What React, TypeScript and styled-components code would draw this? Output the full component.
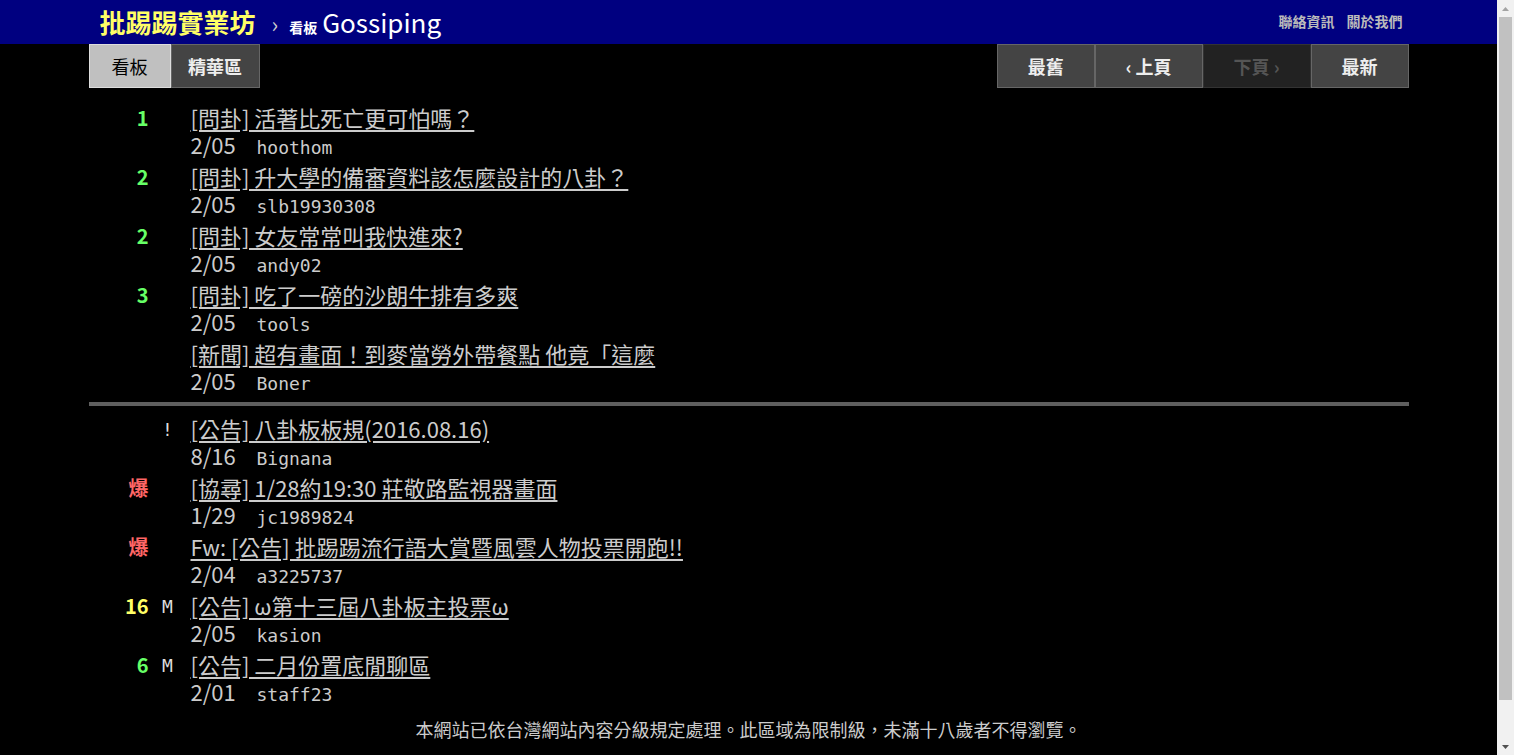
import React from "react";
import styled, { createGlobalStyle, css } from "styled-components";

const Global = createGlobalStyle`
  html, body { margin: 0; padding: 0; background: #000; overflow: hidden; }
  body {
    font-family: "Noto Sans CJK TC", "Noto Sans", sans-serif;
    color: #ccc;
  }
  * { box-sizing: border-box; }
`;

const Shell = styled.div`
  display: flex;
  height: 100vh;
`;

const Page = styled.div`
  flex: 1;
  min-width: 0;
  height: 100vh;
  overflow: hidden;
  background: #000;
`;

const ScrollBar = styled.div`
  width: 17px;
  height: 100vh;
  background: #f1f1f1;
  display: flex;
  flex-direction: column;
  align-items: center;
`;

const ScrollArrow = styled.div<{ $dark?: boolean }>`
  height: 17px;
  width: 17px;
  display: flex;
  align-items: center;
  justify-content: center;
  svg { display: block; }
  color: ${(p) => (p.$dark ? "#505050" : "#a3a3a3")};
`;

const ScrollTrack = styled.div`
  flex: 1;
  width: 100%;
  padding: 0 2px;
  display: flex;
  flex-direction: column;
`;

const ScrollThumb = styled.div`
  height: 683px;
  background: #c1c1c1;
`;

const TopBar = styled.header`
  background: #000080;
  height: 44px;
`;

const TopInner = styled.div`
  width: 1320px;
  height: 100%;
  margin: 0 auto;
  padding: 0 6px 0 11px;
  display: flex;
  align-items: center;
  justify-content: space-between;
`;

const Brand = styled.div`
  display: flex;
  align-items: baseline;
`;

const Logo = styled.a`
  font-size: 26px;
  font-weight: bold;
  color: #ffff66;
  text-decoration: none;
  line-height: 44px;
`;

const Crumb = styled.span`
  color: #ccc;
  font-size: 22px;
  margin: 0 11px 0 16px;
`;

const BoardLabel = styled.span`
  color: #fff;
  font-size: 14px;
  font-weight: bold;
  margin-right: 5px;
`;

const BoardName = styled.a`
  color: #fff;
  font-size: 26px;
  text-decoration: none;
`;

const Links = styled.nav`
  display: flex;
  gap: 12px;
  margin-top: -3px;
`;

const TopLink = styled.a`
  color: #bbb;
  font-size: 14px;
  font-weight: bold;
  text-decoration: none;
`;

const Main = styled.main`
  width: 1320px;
  margin: 0 auto;
`;

const ActionBar = styled.div`
  display: flex;
  justify-content: space-between;
  height: 44px;
`;

const BtnGroup = styled.div`
  display: flex;
`;

type Variant = "normal" | "selected" | "disabled";

const Btn = styled.a<{ $variant?: Variant; $w?: number }>`
  height: 44px;
  display: flex;
  align-items: center;
  justify-content: center;
  padding: 0 30px;
  border: 1px solid #666;
  background: #444;
  color: #eee;
  font-size: 18px;
  font-weight: bold;
  text-decoration: none;
  white-space: nowrap;
  ${(p) => (p.$w ? css`width: ${p.$w}px; padding: 0;` : "")}
  ${(p) =>
    p.$variant === "selected" &&
    css`
      background: #c0c0c0;
      color: #000;
      border-color: #ddd;
      font-weight: normal;
    `}
  ${(p) =>
    p.$variant === "disabled" &&
    css`
      background: #222;
      color: #555;
      border-color: #333;
    `}
`;

const List = styled.div`
  margin-top: 11px;
`;

const Entry = styled.div`
  display: flex;
  height: 59px;
  padding: 4px 0 3px 20px;
`;

const Nrec = styled.div<{ $color?: string }>`
  width: 40px;
  text-align: right;
  font-size: 20px;
  font-weight: bold;
  line-height: 30px;
  color: ${(p) => p.$color || "#ccc"};
`;

const Mark = styled.div`
  width: 32px;
  margin: 0 7px 0 3px;
  text-align: center;
  font-family: "DejaVu Sans Mono", monospace;
  font-size: 18px;
  line-height: 32px;
  color: #ddd;
`;

const EntryBody = styled.div`
  display: flex;
  flex-direction: column;
`;

const Title = styled.a`
  height: 28px;
  font-size: 22px;
  line-height: 28px;
  color: #ccc;
  text-decoration: underline;
  text-underline-offset: 3px;
  white-space: nowrap;
`;

const Meta = styled.div`
  display: flex;
  align-items: baseline;
  height: 24px;
  padding-top: 2px;
`;

const DateText = styled.span`
  width: 66px;
  font-size: 22px;
  line-height: 22px;
`;

const Author = styled.span`
  font-family: "DejaVu Sans Mono", monospace;
  font-size: 18px;
  line-height: 22px;
`;

const Separator = styled.div`
  height: 4px;
  background: #5f5f5f;
  margin: 8px 0 4px;
`;

const Footer = styled.footer`
  text-align: center;
  font-size: 18px;
  line-height: 24px;
  margin-top: 12px;
  padding-bottom: 60px;
`;

type Item = { n?: string; c?: string; mark?: string; title: string; date: string; author: string };

const GREEN = "#66ff66";
const YELLOW = "#ffff66";
const RED = "#ff6666";

const posts: Item[] = [
  { n: "1", c: GREEN, title: "[問卦] 活著比死亡更可怕嗎？", date: "2/05", author: "hoothom" },
  { n: "2", c: GREEN, title: "[問卦] 升大學的備審資料該怎麼設計的八卦？", date: "2/05", author: "slb19930308" },
  { n: "2", c: GREEN, title: "[問卦] 女友常常叫我快進來?", date: "2/05", author: "andy02" },
  { n: "3", c: GREEN, title: "[問卦] 吃了一磅的沙朗牛排有多爽", date: "2/05", author: "tools" },
  { title: "[新聞] 超有畫面！到麥當勞外帶餐點 他竟「這麼", date: "2/05", author: "Boner" },
];

const pinned: Item[] = [
  { mark: "!", title: "[公告] 八卦板板規(2016.08.16)", date: "8/16", author: "Bignana" },
  { n: "爆", c: RED, title: "[協尋] 1/28約19:30 莊敬路監視器畫面", date: "1/29", author: "jc1989824" },
  { n: "爆", c: RED, title: "Fw: [公告] 批踢踢流行語大賞暨風雲人物投票開跑!!", date: "2/04", author: "a3225737" },
  { n: "16", c: YELLOW, mark: "M", title: "[公告] ω第十三屆八卦板主投票ω", date: "2/05", author: "kasion" },
  { n: "6", c: GREEN, mark: "M", title: "[公告] 二月份置底閒聊區", date: "2/01", author: "staff23" },
];

const Row = ({ item }: { item: Item }) => (
  <Entry>
    <Nrec $color={item.c}>{item.n || ""}</Nrec>
    <Mark>{item.mark || ""}</Mark>
    <EntryBody>
      <Title href="#">{item.title}</Title>
      <Meta>
        <DateText>{item.date}</DateText>
        <Author>{item.author}</Author>
      </Meta>
    </EntryBody>
  </Entry>
);

const Tri = ({ up }: { up?: boolean }) => (
  <svg width="7" height="4" viewBox="0 0 7 4">
    <path d={up ? "M0 4 L3.5 0 L7 4 Z" : "M0 0 L3.5 4 L7 0 Z"} fill="currentColor" />
  </svg>
);

export default function App() {
  return (
    <>
      <Global />
      <Shell>
        <Page>
          <TopBar>
            <TopInner>
              <Brand>
                <Logo href="#">批踢踢實業坊</Logo>
                <Crumb>›</Crumb>
                <BoardLabel>看板</BoardLabel>
                <BoardName href="#">Gossiping</BoardName>
              </Brand>
              <Links>
                <TopLink href="#">聯絡資訊</TopLink>
                <TopLink href="#">關於我們</TopLink>
              </Links>
            </TopInner>
          </TopBar>
          <Main>
            <ActionBar>
              <BtnGroup>
                <Btn href="#" $variant="selected" $w={82}>看板</Btn>
                <Btn href="#" $w={89}>精華區</Btn>
              </BtnGroup>
              <BtnGroup>
                <Btn href="#">最舊</Btn>
                <Btn href="#">‹ 上頁</Btn>
                <Btn $variant="disabled">下頁 ›</Btn>
                <Btn href="#">最新</Btn>
              </BtnGroup>
            </ActionBar>
            <List>
              {posts.map((p, i) => (
                <Row key={"p" + i} item={p} />
              ))}
              <Separator />
              {pinned.map((p, i) => (
                <Row key={"s" + i} item={p} />
              ))}
            </List>
            <Footer>本網站已依台灣網站內容分級規定處理。此區域為限制級，未滿十八歲者不得瀏覽。</Footer>
          </Main>
        </Page>
        <ScrollBar>
          <ScrollArrow>
            <Tri up />
          </ScrollArrow>
          <ScrollTrack>
            <ScrollThumb />
          </ScrollTrack>
          <ScrollArrow $dark>
            <Tri />
          </ScrollArrow>
        </ScrollBar>
      </Shell>
    </>
  );
}
